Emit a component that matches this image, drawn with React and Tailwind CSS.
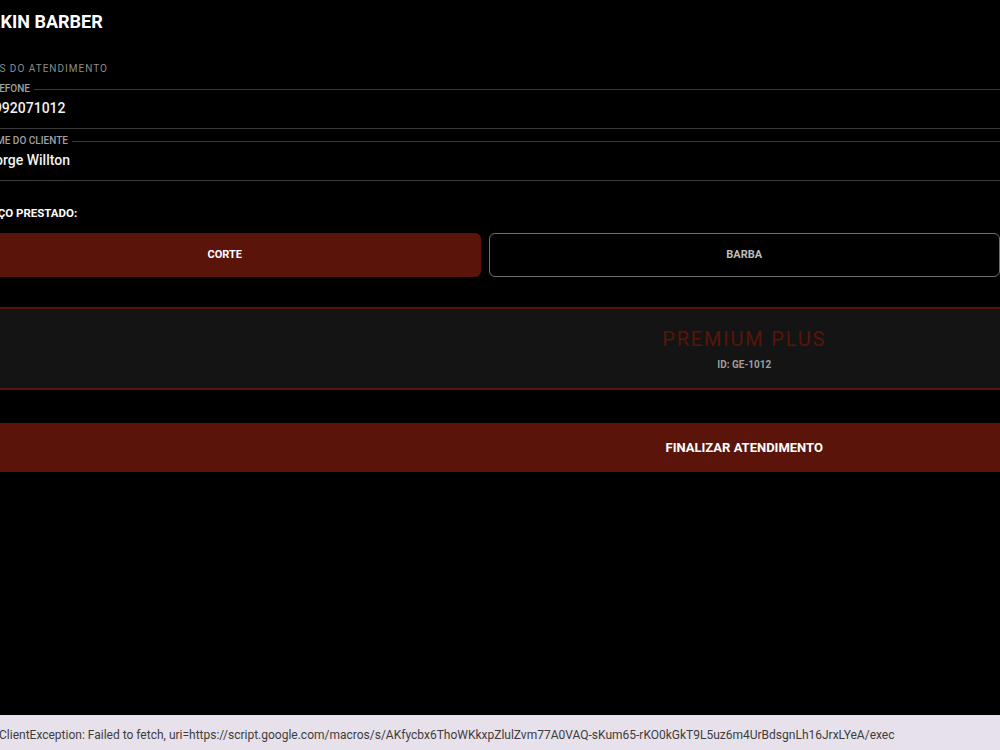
import React from 'react';

const RED = 'bg-[#5a1409]';

function Field({ label, value }) {
  return (
    <div>
      <div className="h-[12px] flex items-center">
        <div className="w-[9px] h-px bg-[#3a3a3a]" />
        <span className="px-1 text-[10px] leading-[12px] font-medium text-[#a0a0a0]">{label}</span>
        <div className="flex-1 h-px bg-[#3a3a3a]" />
      </div>
      <div className="mt-[3px] pl-[9px] h-[20px] text-[14px] leading-[20px] font-medium text-[#f2f2f2]">{value}</div>
      <div className="mt-[10px] h-px bg-[#3a3a3a]" />
    </div>
  );
}

export default function App() {
  return (
    <div className="relative w-[1000px] h-[750px] overflow-hidden bg-black font-['Roboto',sans-serif]">
      <div className="-ml-[31px] w-[1031px]">
        <div className="h-[42px] flex items-center -ml-[2px] text-[18px] font-bold text-white">LARKIN BARBER</div>

        <div className="mt-[20px] text-[10px] leading-[14px] tracking-[1px] text-[#8c8c8c]">DADOS DO ATENDIMENTO</div>

        <div className="mt-[7px]">
          <Field label="TELEFONE" value="11992071012" />
        </div>
        <div className="mt-[6px]">
          <Field label="NOME DO CLIENTE" value="George Willton" />
        </div>

        <div className="mt-[24px] -ml-[3px] text-[11.5px] leading-[16px] font-bold text-white">SERVIÇO PRESTADO:</div>

        <div className="mt-[12px] grid grid-cols-2 gap-2">
          <button className={`h-[44px] rounded-md ${RED} text-[11px] font-bold text-white`}>CORTE</button>
          <button className="h-[44px] rounded-md border border-[#707070] text-[11px] font-bold text-[#bdbdbd]">BARBA</button>
        </div>

        <div className="mt-[30px] border-y-2 border-[#5a1409] bg-[#141414] grid grid-cols-2 gap-2 h-[83px]">
          <div />
          <div className="flex flex-col items-center pt-[18px]">
            <div className="text-[20px] leading-[24px] tracking-[1.8px] text-[#5a1409]">PREMIUM PLUS</div>
            <div className="mt-[8px] text-[10px] leading-[12px] font-bold text-[#9e9e9e]">ID: GE-1012</div>
          </div>
        </div>

        <button className={`mt-[33px] w-full h-[49px] ${RED} grid grid-cols-2 gap-2 items-center`}>
          <span />
          <span className="text-[13px] font-bold text-white">FINALIZAR ATENDIMENTO</span>
        </button>
      </div>

      <div className="absolute left-0 right-0 top-[715px] h-[48px] bg-[#e7e1eb] pt-[12px]">
        <p className="-ml-[1px] text-[12px] leading-[16px] text-[#3d3d3d] whitespace-nowrap">
          ClientException: Failed to fetch, uri=https://script.google.com/macros/s/AKfycbx6ThoWKkxpZlulZvm77A0VAQ-sKum65-rKO0kGkT9L5uz6m4UrBdsgnLh16JrxLYeA/exec
        </p>
      </div>
    </div>
  );
}
